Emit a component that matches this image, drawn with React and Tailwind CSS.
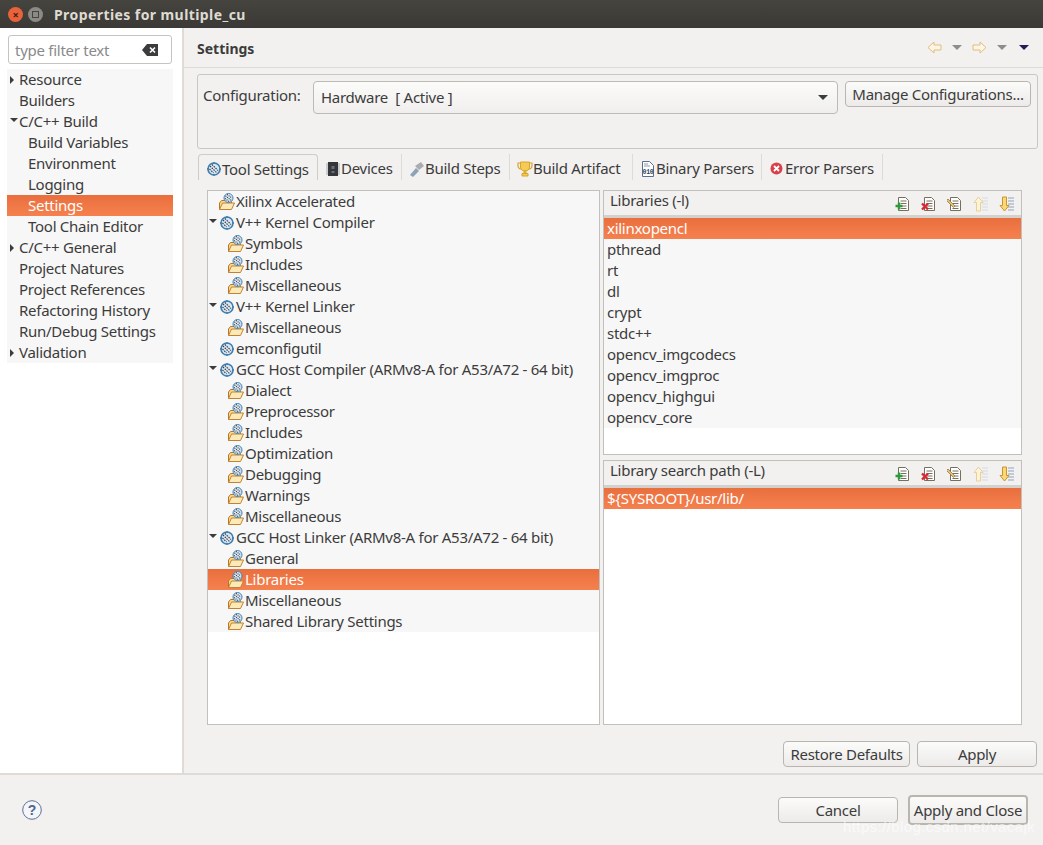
import React from "react";

const sidebarItems = [
  { label: "Resource", level: 0, arrow: "right" },
  { label: "Builders", level: 0 },
  { label: "C/C++ Build", level: 0, arrow: "down" },
  { label: "Build Variables", level: 1 },
  { label: "Environment", level: 1 },
  { label: "Logging", level: 1 },
  { label: "Settings", level: 1, selected: true },
  { label: "Tool Chain Editor", level: 1 },
  { label: "C/C++ General", level: 0, arrow: "right" },
  { label: "Project Natures", level: 0 },
  { label: "Project References", level: 0 },
  { label: "Refactoring History", level: 0 },
  { label: "Run/Debug Settings", level: 0 },
  { label: "Validation", level: 0, arrow: "right" },
];

const toolItems = [
  { label: "Xilinx Accelerated", level: 0, icon: "folder" },
  { label: "V++ Kernel Compiler", level: 0, icon: "gear", arrow: true },
  { label: "Symbols", level: 1, icon: "folder" },
  { label: "Includes", level: 1, icon: "folder" },
  { label: "Miscellaneous", level: 1, icon: "folder" },
  { label: "V++ Kernel Linker", level: 0, icon: "gear", arrow: true },
  { label: "Miscellaneous", level: 1, icon: "folder" },
  { label: "emconfigutil", level: 0, icon: "gear" },
  { label: "GCC Host Compiler (ARMv8-A for A53/A72 - 64 bit)", level: 0, icon: "gear", arrow: true },
  { label: "Dialect", level: 1, icon: "folder" },
  { label: "Preprocessor", level: 1, icon: "folder" },
  { label: "Includes", level: 1, icon: "folder" },
  { label: "Optimization", level: 1, icon: "folder" },
  { label: "Debugging", level: 1, icon: "folder" },
  { label: "Warnings", level: 1, icon: "folder" },
  { label: "Miscellaneous", level: 1, icon: "folder" },
  { label: "GCC Host Linker (ARMv8-A for A53/A72 - 64 bit)", level: 0, icon: "gear", arrow: true },
  { label: "General", level: 1, icon: "folder" },
  { label: "Libraries", level: 1, icon: "folder", selected: true },
  { label: "Miscellaneous", level: 1, icon: "folder" },
  { label: "Shared Library Settings", level: 1, icon: "folder" },
];

const libraries = [
  "xilinxopencl", "pthread", "rt", "dl", "crypt", "stdc++",
  "opencv_imgcodecs", "opencv_imgproc", "opencv_highgui", "opencv_core",
];

const GearIcon = () => (
  <svg width="16" height="16" viewBox="0 0 16 16" className="shrink-0">
    <circle cx="8" cy="8" r="6" fill="#dbe8f3" stroke="#3f7fb0" strokeWidth="1.600" />
    <path d="M4 5l7 7M6 3.500l6 6M3.500 8l4 4" stroke="#3a4550" strokeWidth="1.200" strokeDasharray="1.500 1" />
    <path d="M8 1v2M1 8h2M13 8h2M8 13v2" stroke="#3f7fb0" strokeWidth="1.400" />
  </svg>
);

const FolderIcon = () => (
  <svg width="16" height="18" viewBox="0 0 16 18" className="shrink-0">
    <path d="M0.500 16.500V10l2-2.500h5l1 1h4v2" fill="#fbd98c" stroke="#b5752a" strokeWidth="1" />
    <path d="M0.500 16.500l3-6.500h12l-3 6.500z" fill="#fde9b8" stroke="#c0832f" strokeWidth="1" />
    <circle cx="9.500" cy="5" r="4.500" fill="#dbe8f3" stroke="#3f7fb0" strokeWidth="1" />
    <path d="M6.500 3l6 4.500M8 1.500l5 3.500M6 5.500l4 3" stroke="#2e3a46" strokeWidth="1.100" strokeDasharray="1 1" />
  </svg>
);

const ChipIcon = () => (
  <svg width="16" height="16" viewBox="0 0 16 16" className="shrink-0">
    <path d="M1 3h14M1 5h14M1 7h14M1 9h14M1 11h14M1 13h14" stroke="#9a9a9a" strokeWidth="0.800" />
    <rect x="3" y="1" width="10" height="14" fill="#33363a" />
    <rect x="6.500" y="5" width="3" height="3" fill="#6d7074" />
    <rect x="6.500" y="10" width="3" height="2" fill="#6d7074" />
  </svg>
);

const HammerIcon = () => (
  <svg width="16" height="16" viewBox="0 0 16 16" className="shrink-0">
    <path d="M1 14l6-7 3 3-6 6z" fill="#8da2b5" />
    <path d="M6 5l6-4 3 4-5 4z" fill="#a9adb2" />
  </svg>
);

const TrophyIcon = () => (
  <svg width="16" height="16" viewBox="0 0 16 16" className="shrink-0">
    <path d="M3 2H1v3c0 2 2 3 3 3M13 2h2v3c0 2-2 3-3 3" fill="none" stroke="#d9a42b" strokeWidth="1.200" />
    <path d="M3.500 1h9v5c0 2.500-2 4-4.500 4s-4.500-1.500-4.500-4z" fill="#f6cb55" stroke="#d9a42b" />
    <path d="M7 10h2v2H7zM5 12.500h6V15H5z" fill="#f6cb55" stroke="#d9a42b" />
  </svg>
);

const BinaryIcon = () => (
  <svg width="14" height="16" viewBox="0 0 14 16" className="shrink-0">
    <path d="M1.500 0.500h7l4 4v11h-11z" fill="#fff" stroke="#5b6f8c" />
    <path d="M3 3h4M3 5h6" stroke="#8a9ab0" />
    <text x="1.500" y="13" fontSize="6.500" fontFamily="Liberation Mono, monospace" fontWeight="700" fill="#2a3f63">010</text>
  </svg>
);

const ErrorIcon = () => (
  <svg width="13" height="13" viewBox="0 0 13 13" className="shrink-0">
    <circle cx="6.500" cy="6.500" r="6" fill="#d8404c" />
    <path d="M4 4l5 5M9 4l-5 5" stroke="#fff" strokeWidth="1.800" />
  </svg>
);

const Doc = () => (
  <path
    d="M3.500 1.500h7l3 3v10h-10z M5.500 5h6M5.500 7.500h6M5.500 10h6M5.500 12.500h6"
    fill="#fff"
    stroke="#75705c"
  />
);

const AddIcon = () => (
  <svg width="16" height="16" viewBox="0 0 16 16">
    <Doc />
    <path d="M0.500 10h7M4 6.500v7" stroke="#2f9a3a" strokeWidth="2.400" />
  </svg>
);

const DeleteIcon = () => (
  <svg width="16" height="16" viewBox="0 0 16 16">
    <Doc />
    <path d="M1 7.500l6 6M7 7.500l-6 6" stroke="#d42a34" strokeWidth="2.400" />
  </svg>
);

const EditIcon = () => (
  <svg width="16" height="16" viewBox="0 0 16 16">
    <Doc />
    <path d="M1 3l7 7-1.500 1.500-7-7z" fill="#e3c07a" stroke="#9a7a3c" strokeWidth="0.800" />
  </svg>
);

const UpIcon = () => (
  <svg width="16" height="16" viewBox="0 0 16 16">
    <path d="M9 2h6M9 5h6M9 8h6M9 11h6M9 14h6" stroke="#d3dae3" />
    <path d="M5.500 1L1 6.500h2.500V15h4V6.500H10z" fill="#fdf3d8" stroke="#e8cf98" />
  </svg>
);

const DownIcon = () => (
  <svg width="16" height="16" viewBox="0 0 16 16">
    <path d="M9 2h6M9 5h6M9 8h6M9 11h6M9 14h6" stroke="#8fa3bf" />
    <path d="M5.500 15L1 9.500h2.500V1h4v8.500H10z" fill="#fbd875" stroke="#c9952e" />
  </svg>
);

const Caret = ({ className = "border-t-[#8d8d8d]" }) => (
  <span className={`h-0 w-0 border-x-[5px] border-t-[5px] border-x-transparent ${className}`} />
);

const NavArrow = ({ flip }) => (
  <svg width="15" height="13" viewBox="0 0 15 13" className={flip ? "-scale-x-100" : ""}>
    <path d="M1 6.500L7 1v3h7v5H7v3z" fill="#fdf6e6" stroke="#e2bd7c" strokeWidth="1" />
  </svg>
);

const TreeArrow = ({ dir }) =>
  dir === "right" ? (
    <span className="h-0 w-0 border-y-[4px] border-l-[4px] border-y-transparent border-l-[#3c3c3c]" />
  ) : (
    <span className="h-0 w-0 border-x-[4px] border-t-[4px] border-x-transparent border-t-[#3c3c3c]" />
  );

const Button = ({ children, className = "" }) => (
  <button className={`h-[26px] rounded-[4px] border border-[#b9b6b0] bg-gradient-to-b from-[#fbfbfa] to-[#ecebe9] text-[15px] text-[#3c3c3c] ${className}`}>
    {children}
  </button>
);

const Tab = ({ icon, label, width, active }) => (
  <div
    className={`flex h-[26px] items-center pt-[3px] ${width} ${
      active
        ? "rounded-t-[4px] border border-b-0 border-[#cfccc7] pl-[6px]"
        : "border-r border-[#dedbd7] pl-[6px]"
    }`}
  >
    <span className="flex w-[17px] shrink-0 justify-center">{icon}</span>
    <span>{label}</span>
  </div>
);

const ListPanel = ({ title, items, height }) => (
  <div className={`flex flex-col border border-[#c2c0bc] bg-white ${height}`}>
    <div className="flex h-[27px] shrink-0 items-start justify-between border-b-[3px] border-[#d3d1cd] bg-[#f2f1f0] pl-[6px] pr-[6px]">
      <span className="leading-[19px]">{title}</span>
      <div className="flex gap-[10px] pt-[5px]">
        <AddIcon />
        <DeleteIcon />
        <EditIcon />
        <UpIcon />
        <DownIcon />
      </div>
    </div>
    <div>
      {items.map((item, i) => (
        <div
          key={item}
          className={`h-[21px] pl-[3px] leading-[21px] ${
            i === 0
              ? "bg-gradient-to-b from-[#e96f3d] to-[#f5814f] text-white"
              : "bg-[#f7f7f7]"
          }`}
        >
          {item}
        </div>
      ))}
    </div>
  </div>
);

export default function App() {
  return (
    <div className="flex h-[845px] w-[1043px] flex-col overflow-hidden bg-[#f2f1f0] text-[15px] tracking-[-0.27px] text-[#3c3c3c] [font-family:'Noto_Sans',sans-serif]">
      {/* barre de titre */}
      <div className="flex h-[28px] shrink-0 items-center bg-gradient-to-b from-[#45443f] to-[#3a3935] pl-[8px]">
        <span className="flex h-[15px] w-[15px] items-center justify-center rounded-full bg-[#e9623a] text-[11px] font-bold leading-none text-[#43221a]">×</span>
        <span className="ml-[5px] flex h-[15px] w-[15px] items-center justify-center rounded-full bg-[#8b8a85]">
          <span className="h-[7px] w-[7px] border border-[#45443f]" />
        </span>
        <span className="ml-[11px] text-[14px] font-bold tracking-[0.42px] text-[#dfdbd2]">Properties for multiple_cu</span>
      </div>

      <div className="flex h-[745px] shrink-0">
        {/* colonne gauche */}
        <div className="w-[184px] shrink-0 border-r-[2px] border-[#dfdcd8] bg-white pl-[7px] pr-[9px] pt-[7px]">
          <div className="ml-[1px] flex h-[29px] w-[164px] items-center justify-between rounded-[3px] border border-[#c6c4bf] bg-white pl-[6px] pr-[13px]">
            <span className="pt-[1px] text-[#8a8a8a]">type filter text</span>
            <svg width="16" height="12" viewBox="0 0 16 12">
              <path d="M5 0h11v12H5L0 6z" fill="#3c3c3c" />
              <path d="M8 3.500l5 5M13 3.500l-5 5" stroke="#fff" strokeWidth="1.600" />
            </svg>
          </div>
          <div className="mt-[5px] bg-[#f7f7f7]">
            {sidebarItems.map((item) => (
              <div
                key={item.label}
                className={`relative h-[21px] leading-[21px] ${item.level === 1 ? "pl-[21px]" : "pl-[12px]"} ${
                  item.selected ? "bg-gradient-to-b from-[#e96f3d] to-[#f5814f] text-white" : ""
                }`}
              >
                {item.arrow && (
                  <span className="absolute left-[3px] top-[7px] flex">
                    <TreeArrow dir={item.arrow} />
                  </span>
                )}
                {item.label}
              </div>
            ))}
          </div>
        </div>

        {/* contenu */}
        <div className="flex min-w-0 flex-1 flex-col">
          <div className="flex h-[40px] shrink-0 items-center justify-between border-b border-[#dedbd7] pl-[13px] pr-[14px]">
            <span className="pt-[1px] text-[14px] font-bold tracking-normal">Settings</span>
            <div className="flex items-center">
              <NavArrow />
              <span className="mx-[10px] flex"><Caret /></span>
              <NavArrow flip />
              <span className="ml-[10px] mr-[12px] flex"><Caret /></span>
              <Caret className="border-t-[#2c1a55]" />
            </div>
          </div>

          <div className="pl-[13px] pr-[5px] pt-[6px]">
            <div className="flex h-[75px] items-start rounded-[3px] border border-[#c9c7c2] pl-[5px] pr-[6px] pt-[6px]">
              <span className="mt-[3px] w-[110px] shrink-0">Configuration:</span>
              <div className="flex h-[33px] w-[525px] items-center justify-between rounded-[4px] border border-[#bdbab5] bg-gradient-to-b from-[#fbfbfa] to-[#f0efed] pl-[7px] pr-[9px]">
                <span>Hardware&nbsp; [ Active ]</span>
                <Caret className="border-t-[#3c3c3c]" />
              </div>
              <Button className="ml-[7px] w-[186px] whitespace-nowrap">Manage Configurations...</Button>
            </div>

            <div className="mt-[5px] flex pl-[1px]">
              <Tab active width="w-[120px]" icon={<GearIcon />} label="Tool Settings" />
              <Tab width="w-[84px]" icon={<ChipIcon />} label="Devices" />
              <Tab width="w-[108px]" icon={<HammerIcon />} label="Build Steps" />
              <Tab width="w-[123px]" icon={<TrophyIcon />} label="Build Artifact" />
              <Tab width="w-[129px]" icon={<BinaryIcon />} label="Binary Parsers" />
              <Tab width="w-[121px]" icon={<ErrorIcon />} label="Error Parsers" />
            </div>

            <div className="mt-[10px] flex pl-[10px]">
              <div className="h-[535px] w-[393px] shrink-0 border border-[#c2c0bc] bg-white">
                <div className="bg-[#f7f7f7]">
                  {toolItems.map((item, i) => (
                    <div
                      key={i}
                      className={`relative flex h-[21px] items-center ${item.level === 1 ? "pl-[20px]" : "pl-[11px]"} ${
                        item.selected ? "bg-gradient-to-b from-[#e96f3d] to-[#f5814f] text-white" : ""
                      }`}
                    >
                      {item.arrow && (
                        <span className="absolute left-[1px] top-[7px] flex">
                          <TreeArrow dir="down" />
                        </span>
                      )}
                      {item.icon === "gear" ? <GearIcon /> : <FolderIcon />}
                      <span className="ml-[1px] whitespace-nowrap">{item.label}</span>
                    </div>
                  ))}
                </div>
              </div>
              <div className="ml-[3px] flex w-[419px] shrink-0 flex-col gap-[5px]">
                <ListPanel title="Libraries (-l)" items={libraries} height="h-[265px]" />
                <ListPanel title="Library search path (-L)" items={["${SYSROOT}/usr/lib/"]} height="h-[265px]" />
              </div>
            </div>

            <div className="mt-[16px] flex justify-end gap-[7px] pr-[1px]">
              <Button className="w-[127px]">Restore Defaults</Button>
              <Button className="w-[120px]">Apply</Button>
            </div>
          </div>
        </div>
      </div>

      {/* bas de fenetre */}
      <div className="flex h-[72px] shrink-0 items-center justify-between border-t-[2px] border-[#dfdcd8] pl-[22px] pr-[15px]">
        <svg width="20" height="20" viewBox="0 0 20 20">
          <circle cx="10" cy="10" r="9.300" fill="#f4f6f9" stroke="#5a7194" />
          <text x="10" y="15" textAnchor="middle" fontSize="14" fontWeight="700" fontFamily="Liberation Sans, sans-serif" fill="#4d668c">?</text>
        </svg>
        <div className="flex items-center gap-[10px]">
          <Button className="w-[120px]">Cancel</Button>
          <Button className="box-content w-[116px] border-[2px] border-[#a5a3a0]">Apply and Close</Button>
        </div>
      </div>

      {/* filigrane */}
      <div className="absolute left-[843px] top-[816px] text-[15px] tracking-[0.4px] text-white/60 [font-family:'Liberation_Sans',sans-serif]">
        https://blog.csdn.net/vacajk
      </div>
    </div>
  );
}
